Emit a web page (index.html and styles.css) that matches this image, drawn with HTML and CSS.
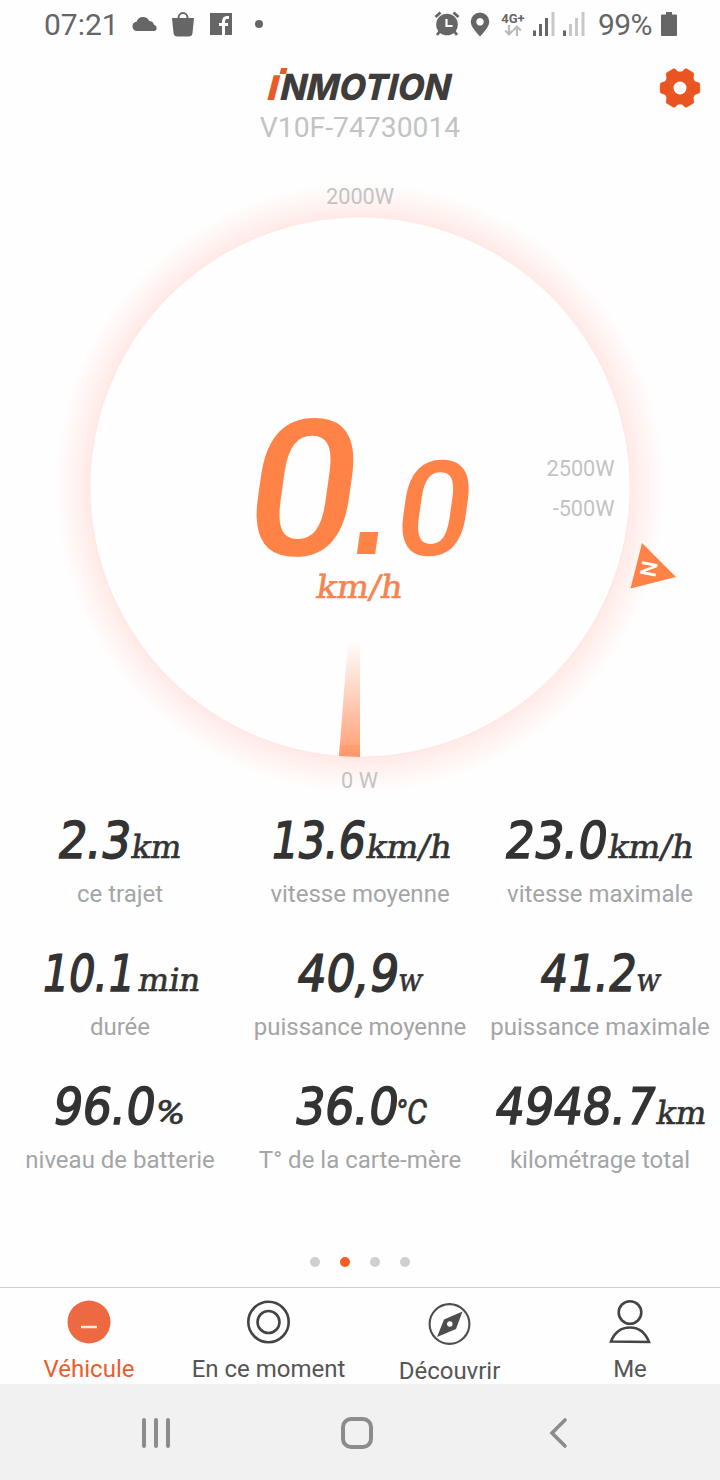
FILE: index.html
```html
<!DOCTYPE html>
<html lang="fr">
<head>
    <meta charset="UTF-8">
    <title>InMotion</title>
    <link rel="stylesheet" href="styles.css">
</head>
<body>
<div class="status">
    <span class="clock">07:21</span>
    <svg class="cloud" width="26" height="16" viewBox="0 0 26 16"><path d="M4.500 15a4.700 4.700 0 0 1 0-9.300Q6 1 11 1q4.500 0 6.200 4 4 .3 4.800 3.800a3.200 3.200 0 0 1 .5 6.200z"/></svg>
    <svg class="bag" width="24" height="26" viewBox="0 0 24 26"><path d="M1 7h5.500a5.500 6 0 0 1 11 0H23l-1.500 15q-.5 3.500-4 3.500h-11q-3.500 0-4-3.500zM8.500 7h7a3.500 4 0 0 0-7 0z" fill-rule="evenodd"/></svg>
    <svg class="fb" width="22" height="22" viewBox="0 0 22 22"><path d="M0 0h22v22H0z"/><path d="M13.500 22v-13q0-4.500 3.500-4.500h2M9 11.500h9" fill="none" stroke="#fefefe" stroke-width="3"/></svg>
    <span class="more"></span>
    <svg class="alarm" width="26" height="26" viewBox="0 0 26 26"><circle cx="13" cy="13.500" r="10.800"/><path d="M1.500 6l5-4.500M24.500 6l-5-4.500M6 20l-3 4M20 20l3 4" fill="none" stroke="#666" stroke-width="2.800"/><path d="M12.500 8v7h6" fill="none" stroke="#fefefe" stroke-width="2.200"/></svg>
    <svg class="pin" width="20" height="25" viewBox="0 0 20 25"><path fill-rule="evenodd" d="M10 .5a9.300 9.300 0 0 1 9.300 9.300Q19.300 15 10 24.500.7 15 .7 9.800A9.300 9.300 0 0 1 10 .5zM10 6a3.800 3.800 0 1 0 .01 0z"/></svg>
    <div class="data">
        <span>4G+</span>
        <svg width="18" height="11" viewBox="0 0 18 11"><path d="M5 0v9M1.200 5.500L5 9.500l3.800-4M13 11V2M9.200 5.500L13 1.500l3.800 4" fill="none" stroke="#bbb" stroke-width="2.200"/></svg>
    </div>
    <svg class="bars" width="22" height="24" viewBox="0 0 22 24"><path d="M0 18.500h3V24H0zM6 12h3v12H6zM12 6h3v18h-3z"/><path d="M18.500 0h3v24h-3z" fill="#c8c8c8"/></svg>
    <svg class="bars2" width="22" height="24" viewBox="0 0 22 24"><path d="M0 18.500h3V24H0z"/><path d="M6 12h3v12H6zM12 6h3v18h-3zM18.500 0h3v24h-3z" fill="#c8c8c8"/></svg>
    <span class="percent">99%</span>
    <svg class="battery" width="16" height="24" viewBox="0 0 16 24"><path d="M5 0h6v2.500h4q1 0 1 1V23q0 1-1 1H1q-1 0-1-1V3.500q0-1 1-1h4z"/></svg>
</div>

<div class="header">
    <div class="side"></div>
    <div class="title">
        <svg class="logo" width="190" height="36" viewBox="0 0 190 36">
            <text class="logoI" transform="translate(2 35) skewX(-4)" textLength="11" lengthAdjust="spacingAndGlyphs">I</text>
            <rect transform="translate(15.500 9) skewX(-15)" x="-1" y="-6" width="6.500" height="6" fill="#e95a26"/>
            <text class="logoText" transform="translate(15 35) skewX(-4)" textLength="170" lengthAdjust="spacingAndGlyphs">NMOTION</text>
        </svg>
        <div class="device">V10F-74730014</div>
    </div>
    <div class="side">
        <svg class="gear" width="40" height="40" viewBox="-20 -20 40 40">
            <defs><path id="tooth" d="M0 0L14 -8.100Q14.800 -6 17.500 -5.700Q19.900 -5.300 19.900 -3.800V3.800Q19.900 5.300 17.500 5.700Q14.800 6 14 8.100z"/></defs>
            <g fill="#e95420" stroke="#e95420" stroke-width=".4">
                <use href="#tooth"/><use href="#tooth" transform="rotate(60)"/><use href="#tooth" transform="rotate(120)"/>
                <use href="#tooth" transform="rotate(180)"/><use href="#tooth" transform="rotate(240)"/><use href="#tooth" transform="rotate(300)"/>
            </g>
            <circle r="6.500" fill="#fefefe"/>
        </svg>
    </div>
</div>

<svg class="gauge" width="720" height="640" viewBox="0 160 720 640">
    <defs>
        <radialGradient id="glow" gradientUnits="userSpaceOnUse" cx="360" cy="487" r="305">
            <stop offset=".88" stop-color="#ffe8e5"/>
            <stop offset=".93" stop-color="#fff2f0"/>
            <stop offset="1" stop-color="#fefefe"/>
        </radialGradient>
        <linearGradient id="beam" x1="0" y1="0" x2="0" y2="1">
            <stop offset="0" stop-color="#ffa27a" stop-opacity="0"/>
            <stop offset="1" stop-color="#ff9c70"/>
        </linearGradient>
    </defs>
    <circle cx="360" cy="487" r="305" fill="url(#glow)"/>
    <circle cx="360" cy="487" r="270" fill="#fefefe" stroke="#fde3da" stroke-width=".6"/>
    <path d="M348 640H360V757L339 756z" fill="url(#beam)"/>
    <path d="M340 745H360V757L339 756z" fill="#ff8a5c" fill-opacity=".3"/>
    <text class="watt" x="360" y="204" text-anchor="middle">2000W</text>
    <text class="watt" x="614.500" y="476" text-anchor="end">2500W</text>
    <text class="watt" x="614.500" y="516" text-anchor="end">-500W</text>
    <text class="watt" x="359.500" y="788" text-anchor="middle">0 W</text>
    <text class="speed" transform="translate(240 555) skewX(-8)" textLength="111" lengthAdjust="spacingAndGlyphs">0</text>
    <text class="speed point" transform="translate(338 554) skewX(-8)">.</text>
    <text class="speed small" transform="translate(391 555) skewX(-8)" textLength="76" lengthAdjust="spacingAndGlyphs">0</text>
    <text class="speedUnit" transform="translate(315 598) skewX(-9)" textLength="86" lengthAdjust="spacingAndGlyphs">km/h</text>
    <path d="M642 543L676 577L630.500 588.500z" fill="#ff8247"/>
    <text class="north" transform="translate(649 569) rotate(101)" x="0" y="8" text-anchor="middle">N</text>
</svg>

<div class="stats">
    <div class="stat">
        <svg width="240" height="70"><text class="num" transform="translate(56 58) skewX(-9)" textLength="72" lengthAdjust="spacingAndGlyphs">2.3</text><text class="unit" transform="translate(130 58) skewX(-9)" textLength="50" lengthAdjust="spacingAndGlyphs">km</text></svg>
        <div class="label">ce trajet</div>
    </div>
    <div class="stat">
        <svg width="240" height="70"><text class="num" transform="translate(29 58) skewX(-9)" textLength="94" lengthAdjust="spacingAndGlyphs">13.6</text><text class="unit" transform="translate(125 58) skewX(-9)" textLength="85" lengthAdjust="spacingAndGlyphs">km/h</text></svg>
        <div class="label">vitesse moyenne</div>
    </div>
    <div class="stat">
        <svg width="240" height="70"><text class="num" transform="translate(23 58) skewX(-9)" textLength="102" lengthAdjust="spacingAndGlyphs">23.0</text><text class="unit" transform="translate(127 58) skewX(-9)" textLength="85" lengthAdjust="spacingAndGlyphs">km/h</text></svg>
        <div class="label">vitesse maximale</div>
    </div>
    <div class="stat">
        <svg width="240" height="70"><text class="num" transform="translate(40 58) skewX(-9)" textLength="92" lengthAdjust="spacingAndGlyphs">10.1</text><text class="unit" transform="translate(137 58) skewX(-9)" textLength="62" lengthAdjust="spacingAndGlyphs">min</text></svg>
        <div class="label">durée</div>
    </div>
    <div class="stat">
        <svg width="240" height="70"><text class="num" transform="translate(55 58) skewX(-9)" textLength="101" lengthAdjust="spacingAndGlyphs">40,9</text><text class="unit" transform="translate(157 58) skewX(-9)" textLength="24" lengthAdjust="spacingAndGlyphs">w</text></svg>
        <div class="label">puissance moyenne</div>
    </div>
    <div class="stat">
        <svg width="240" height="70"><text class="num" transform="translate(58 58) skewX(-9)" textLength="96" lengthAdjust="spacingAndGlyphs">41.2</text><text class="unit" transform="translate(155 58) skewX(-9)" textLength="24" lengthAdjust="spacingAndGlyphs">w</text></svg>
        <div class="label">puissance maximale</div>
    </div>
    <div class="stat">
        <svg width="240" height="70"><text class="num" transform="translate(51 58) skewX(-9)" textLength="102" lengthAdjust="spacingAndGlyphs">96.0</text><text class="unit sans percentUnit" x="155" y="58" textLength="30" lengthAdjust="spacingAndGlyphs">%</text></svg>
        <div class="label">niveau de batterie</div>
    </div>
    <div class="stat">
        <svg width="240" height="70"><text class="num" transform="translate(53 58) skewX(-9)" textLength="103" lengthAdjust="spacingAndGlyphs">36.0</text><text class="unit sans" x="155" y="58" textLength="32" lengthAdjust="spacingAndGlyphs">°C</text></svg>
        <div class="label">T° de la carte-mère</div>
    </div>
    <div class="stat">
        <svg width="240" height="70"><text class="num" transform="translate(13 58) skewX(-9)" textLength="160" lengthAdjust="spacingAndGlyphs">4948.7</text><text class="unit" transform="translate(175 58) skewX(-9)" textLength="50" lengthAdjust="spacingAndGlyphs">km</text></svg>
        <div class="label">kilométrage total</div>
    </div>
</div>

<div class="dots">
    <span></span><span class="active"></span><span></span><span></span>
</div>

<div class="tabs">
    <div class="tab active">
        <svg width="44" height="44" viewBox="0 0 44 44"><circle cx="22" cy="22" r="21.500" fill="#ec6941"/><path d="M14 27h16" stroke="#fde9e1" stroke-width="2.500"/></svg>
        <span>Véhicule</span>
    </div>
    <div class="tab now">
        <svg width="44" height="44" viewBox="0 0 44 44"><g fill="none" stroke="#444" stroke-width="2.600"><circle cx="21.500" cy="22" r="20.200"/><circle cx="21.500" cy="22" r="11"/></g></svg>
        <span>En ce moment</span>
    </div>
    <div class="tab discover">
        <svg width="44" height="44" viewBox="0 0 44 44"><circle cx="21.500" cy="22" r="19.900" fill="none" stroke="#4d4d4d" stroke-width="2.100"/><path fill="#4d4d4d" fill-rule="evenodd" d="M34.500 9.500L28 27 9 35 16 17.500zM21.800 19.200a2.800 2.800 0 1 0 .01 0z"/></svg>
        <span>Découvrir</span>
    </div>
    <div class="tab me">
        <svg width="44" height="44" viewBox="0 0 44 44"><g fill="none" stroke="#444" stroke-width="2.600"><circle cx="22" cy="12.500" r="11.300"/><path d="M3 41.500Q8.500 27.500 22 27.500T41 42z"/></g></svg>
        <span>Me</span>
    </div>
</div>

<div class="sysnav">
    <svg width="240" height="96" viewBox="0 0 240 96"><path d="M144 36v26M156 36v26M168 36v26" stroke="#8c8c8c" stroke-width="4" stroke-linecap="round"/></svg>
    <svg width="240" height="96" viewBox="0 0 240 96"><rect x="103" y="35" width="28" height="28" rx="8" fill="none" stroke="#8c8c8c" stroke-width="4"/></svg>
    <svg width="240" height="96" viewBox="0 0 240 96"><path d="M85 36L72 49l13 13" fill="none" stroke="#8c8c8c" stroke-width="3.600" stroke-linecap="round"/></svg>
</div>
</body>
</html>
```
FILE: styles.css
```css
body {
    margin: 0;
    width: 720px;
    height: 1480px;
    overflow: hidden;
    background: #fefefe;
    font-family: Roboto, "Liberation Sans", sans-serif;
}
svg {
    display: block;
    flex-shrink: 0;
    overflow: visible;
}
.status {
    display: flex;
    align-items: center;
    height: 48px;
    padding-left: 44px;
    color: #666;
    fill: #666;
    white-space: nowrap;
}
.clock {
    width: 88px;
    font-size: 30px;
}
.bag {
    margin-left: 13px;
}
.fb {
    margin-left: 15px;
}
.more {
    width: 8px;
    height: 8px;
    margin-left: 23px;
    border-radius: 50%;
    background: #666;
}
.alarm {
    margin-left: 171px;
}
.pin {
    margin-left: 10px;
}
.data {
    display: flex;
    flex-direction: column;
    align-items: center;
    width: 24px;
    margin-left: 11px;
    font-size: 13px;
    font-weight: 700;
    line-height: 13px;
}
.bars {
    margin-left: 8px;
}
.bars2 {
    margin-left: 8px;
}
.percent {
    width: 59px;
    margin-left: 13px;
    font-size: 30px;
    letter-spacing: -.6px;
}
.battery {
    margin-left: 4px;
}
.header {
    display: flex;
    height: 112px;
}
.side {
    width: 240px;
}
.title {
    display: flex;
    flex-direction: column;
    align-items: center;
    width: 240px;
    padding-top: 17px;
}
.logo {
    font-family: Inter, Roboto, sans-serif;
    font-style: italic;
    font-weight: 800;
}
.logoText {
    font-size: 36px;
    fill: #3e3d3b;
}
.logoI {
    font-size: 34px;
    fill: #e95a26;
}
.device {
    margin-top: 10px;
    font-size: 28.3px;
    line-height: 34px;
    color: #c3c3c3;
}
.gear {
    margin: 20px 20px 0 180px;
}
.watt {
    font-size: 21.7px;
    fill: #c3c3c3;
}
.speed {
    font-size: 190px;
    font-weight: 500;
    fill: #ff8247;
}
.point {
    font-family: "DejaVu Sans", sans-serif;
    font-size: 177px;
    font-weight: 400;
}
.small {
    font-size: 132px;
}
.speedUnit {
    font-family: "DejaVu Serif", serif;
    font-size: 32px;
    fill: #f58450;
    stroke: #f58450;
    stroke-width: .6px;
}
.north {
    font-size: 22px;
    font-weight: 500;
    fill: #fff;
}
.stats {
    display: grid;
    grid-template-columns: 240px 240px 240px;
    grid-auto-rows: 133px;
}
.num {
    font-family: "DejaVu Sans", sans-serif;
    font-size: 50.5px;
    fill: #333;
    stroke: #333;
    stroke-width: 1.6px;
}
.unit {
    font-family: "DejaVu Serif", serif;
    font-size: 32px;
    fill: #333;
    stroke: #333;
    stroke-width: .6px;
}
.sans {
    font-family: Roboto, sans-serif;
    font-style: italic;
    font-size: 35px;
}
.percentUnit {
    font-size: 33px;
}
.label {
    margin-top: 10px;
    text-align: center;
    font-size: 24px;
    line-height: 28px;
    color: #a3a5a7;
    white-space: nowrap;
}
.dots {
    display: flex;
    justify-content: center;
    gap: 20px;
    height: 30px;
    padding-top: 58px;
}
.dots span {
    width: 10px;
    height: 10px;
    border-radius: 50%;
    background: #cfcfcf;
}
.dots .active {
    background: #f75c23;
}
.tabs {
    display: flex;
    height: 96px;
    border-top: 1px solid #d0d0d0;
}
.tab {
    display: flex;
    flex-direction: column;
    align-items: center;
    gap: 11px;
    width: 180px;
    padding-top: 12px;
    font-size: 24px;
    line-height: 28px;
    color: #555;
}
.tab.active {
    width: 178px;
    color: #ea5d2b;
}
.tab.now,
.tab.discover {
    width: 181px;
}
.tab.discover {
    padding-top: 14px;
}
.sysnav {
    display: flex;
    height: 96px;
    background: #f1f1f1;
}
```
